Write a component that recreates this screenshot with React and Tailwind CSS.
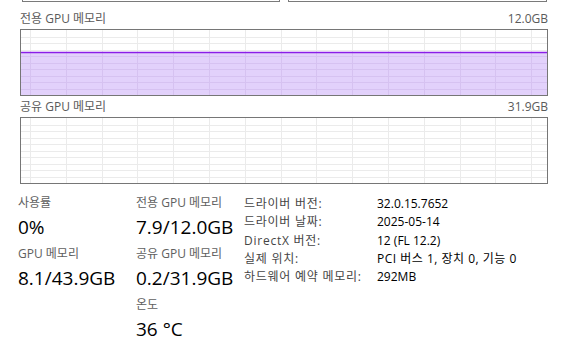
import React from "react";

const VX = [9, 44.8, 80.6, 116.4, 152.2, 188, 223.8, 259.6, 295.4, 331.2, 367, 402.8, 438.6, 474.4, 510.2];

function Grid({ w, h, fillTop }) {
  const rows = [];
  for (let i = 1; i < 10; i++) rows.push((h * i) / 10);
  return (
    <svg width={w} height={h} className="block">
      {fillTop != null && (
        <rect x="0" y={fillTop} width={w} height={h - fillTop} fill="#e2d1fb" />
      )}
      {rows.map((y, i) => (
        <line key={"h" + i} x1="0" x2={w} y1={Math.round(y) + 0.5} y2={Math.round(y) + 0.5}
          stroke={fillTop != null && y > fillTop ? "#d6c2f1" : "#ebebeb"} strokeWidth="1" />
      ))}
      {VX.map((x, i) => (
        <g key={"v" + i}>
          <line x1={Math.round(x) + 0.5} x2={Math.round(x) + 0.5} y1="0" y2={fillTop != null ? fillTop : h}
            stroke="#ebebeb" strokeWidth="1" />
          {fillTop != null && (
            <line x1={Math.round(x) + 0.5} x2={Math.round(x) + 0.5} y1={fillTop} y2={h}
              stroke="#d6c2f1" strokeWidth="1" />
          )}
        </g>
      ))}
      {fillTop != null && (
        <line x1="0" x2={w} y1={fillTop + 0.5} y2={fillTop + 0.5} stroke="#8a1ee8" strokeWidth="1.5" />
      )}
    </svg>
  );
}

function Stat({ label, value }) {
  return (
    <div className="flex flex-col">
      <div className="h-[18px] leading-[18px] text-[12px] text-[#606060]">{label}</div>
      <div className="h-[30px] leading-[30px] text-[19px] text-black">{value}</div>
    </div>
  );
}

export default function App() {
  const info = [
    ["드라이버 버전:", "32.0.15.7652", ""],
    ["드라이버 날짜:", "2025-05-14", ""],
    ["DirectX 버전:", "12 (FL 12.2)", ""],
    ["실제 위치:", "PCI 버스 1, 장치 0, 기능 0", "tracking-[0.5px]"],
    ["하드웨어 예약 메모리:", "292MB", ""],
  ];
  return (
    <div
      className="w-[566px] h-[349px] bg-white overflow-hidden"
      style={{ fontFamily: '"Open Sans", "Noto Sans CJK KR", sans-serif' }}
    >
      <div className="flex gap-[8px] pl-[22px]">
        <div className="w-[258px] h-[2px] border-x border-b border-[#7a7a7a]" />
        <div className="w-[259px] h-[2px] border-x border-b border-[#7a7a7a]" />
      </div>
      <div className="pl-[20px] pr-[18px]">
        <div className="flex justify-between items-center h-[27px] pt-[7px] text-[12px] text-[#5a5a5a]">
          <span>전용 GPU 메모리</span>
          <span>12.0GB</span>
        </div>
        <div className="border border-[#767676] h-[67px]">
          <Grid w={526} h={65} fillTop={22} />
        </div>
        <div className="flex justify-between items-center h-[21px] text-[12px] text-[#5a5a5a]">
          <span>공유 GPU 메모리</span>
          <span>31.9GB</span>
        </div>
        <div className="border border-[#767676] h-[67px]">
          <Grid w={526} h={65} />
        </div>
      </div>
      <div className="flex pt-[10px] pl-[18px]">
        <div className="w-[118px] flex flex-col gap-[3px]">
          <Stat label="사용률" value="0%" />
          <Stat label="GPU 메모리" value="8.1/43.9GB" />
        </div>
        <div className="w-[108px] flex flex-col gap-[3px]">
          <Stat label="전용 GPU 메모리" value="7.9/12.0GB" />
          <Stat label="공유 GPU 메모리" value="0.2/31.9GB" />
          <Stat label="온도" value="36 °C" />
        </div>
        <div className="flex flex-col text-[12px] mt-[1px]">
          {info.map(([k, v, t]) => (
            <div key={k} className="flex h-[18.25px] leading-[18.25px]">
              <span className="w-[133px] text-[#454545] tracking-[0.75px]">{k}</span>
              <span className={"text-black " + t}>{v}</span>
            </div>
          ))}
        </div>
      </div>
    </div>
  );
}
